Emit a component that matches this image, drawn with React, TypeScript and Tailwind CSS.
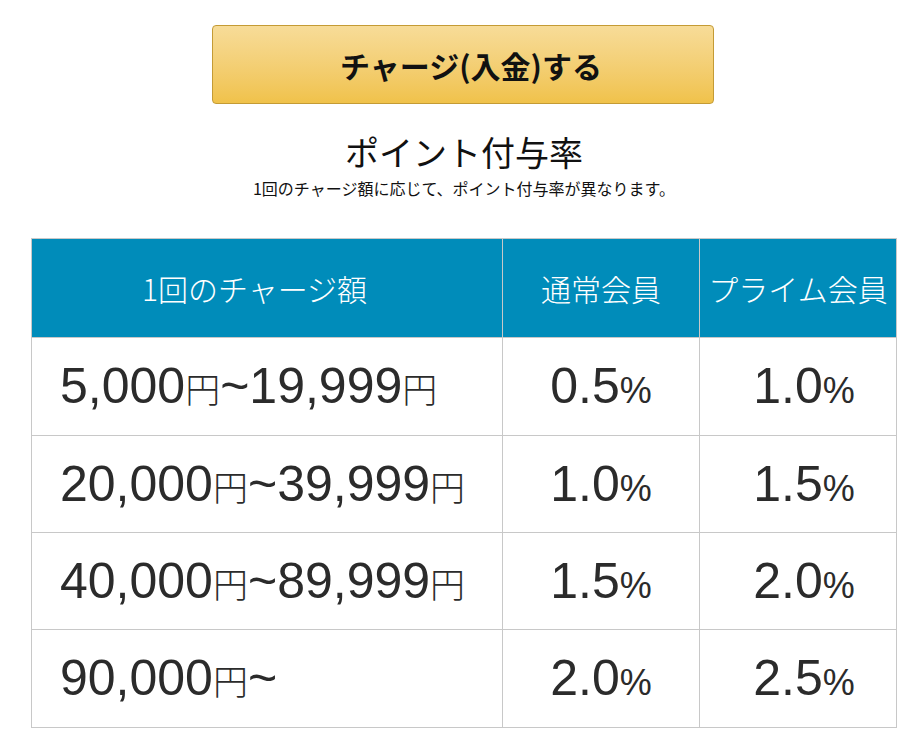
import React from 'react';

const rows = [
  { from: '5,000', to: '19,999', normal: '0.5', prime: '1.0', h: 'h-[98px]' },
  { from: '20,000', to: '39,999', normal: '1.0', prime: '1.5', h: 'h-[97px]' },
  { from: '40,000', to: '89,999', normal: '1.5', prime: '2.0', h: 'h-[97px]' },
  { from: '90,000', to: '', normal: '2.0', prime: '2.5', h: 'h-[98px]' },
];

const jp = "font-['Noto_Sans_CJK_JP',sans-serif]";
const num = "font-['Liberation_Sans','Noto_Sans_CJK_JP',sans-serif]";

const Yen: React.FC = () => (
  <span className={`${jp} text-[35px] font-light`}>円</span>
);

const Rate: React.FC<{ value: string }> = ({ value }) => (
  <span className={`${num} text-[50px] text-[#2b2b2b]`}>
    {value}
    <span className="text-[36px]">%</span>
  </span>
);

export default function App() {
  return (
    <div className="bg-white min-h-[751px] pt-[25px]">
      <div className="ml-[31px] w-[866px]">
        <div className="flex justify-center">
          <button
            className={`${jp} w-[502px] h-[79px] ml-[-2px] pl-[16px] rounded-[4px] border border-[#c49b35] bg-gradient-to-b from-[#f7dc98] to-[#f0c24a] text-[30px] font-bold text-[#111] leading-none`}
          >
            チャージ(入金)する
          </button>
        </div>

        <h2 className={`${jp} mt-[28px] text-center text-[34px] leading-[40px] text-[#111]`}>
          ポイント付与率
        </h2>
        <p className={`${jp} mt-[6px] text-center text-[16px] leading-[20px] text-[#111]`}>
          1回のチャージ額に応じて、ポイント付与率が異なります。
        </p>

        <div className="mt-[40px] grid grid-cols-[471px_197px_197px] border-l border-t border-[#c8c8c8]">
          <div className={`${jp} h-[99px] flex items-center justify-center pr-[25px] bg-[#008cba] border-r border-b border-[#c8c8c8] text-white text-[30px] font-light`}>
            1回のチャージ額
          </div>
          <div className={`${jp} h-[99px] flex items-center justify-center bg-[#008cba] border-r border-b border-[#c8c8c8] text-white text-[30px] font-light`}>
            通常会員
          </div>
          <div className={`${jp} h-[99px] flex items-center justify-center bg-[#008cba] border-r border-b border-[#c8c8c8] text-white text-[30px] font-light`}>
            プライム会員
          </div>

          {rows.map((r) => (
            <React.Fragment key={r.from}>
              <div className={`${r.h} flex items-center pl-[28px] border-r border-b border-[#c8c8c8]`}>
                <span className={`${num} text-[50px] text-[#2b2b2b] whitespace-nowrap`}>
                  {r.from}
                  <Yen />~{r.to}
                  {r.to && <Yen />}
                </span>
              </div>
              <div className={`${r.h} flex items-center justify-center border-r border-b border-[#c8c8c8]`}>
                <Rate value={r.normal} />
              </div>
              <div className={`${r.h} flex items-center justify-center pl-[12px] border-r border-b border-[#c8c8c8]`}>
                <Rate value={r.prime} />
              </div>
            </React.Fragment>
          ))}
        </div>
      </div>
    </div>
  );
}
